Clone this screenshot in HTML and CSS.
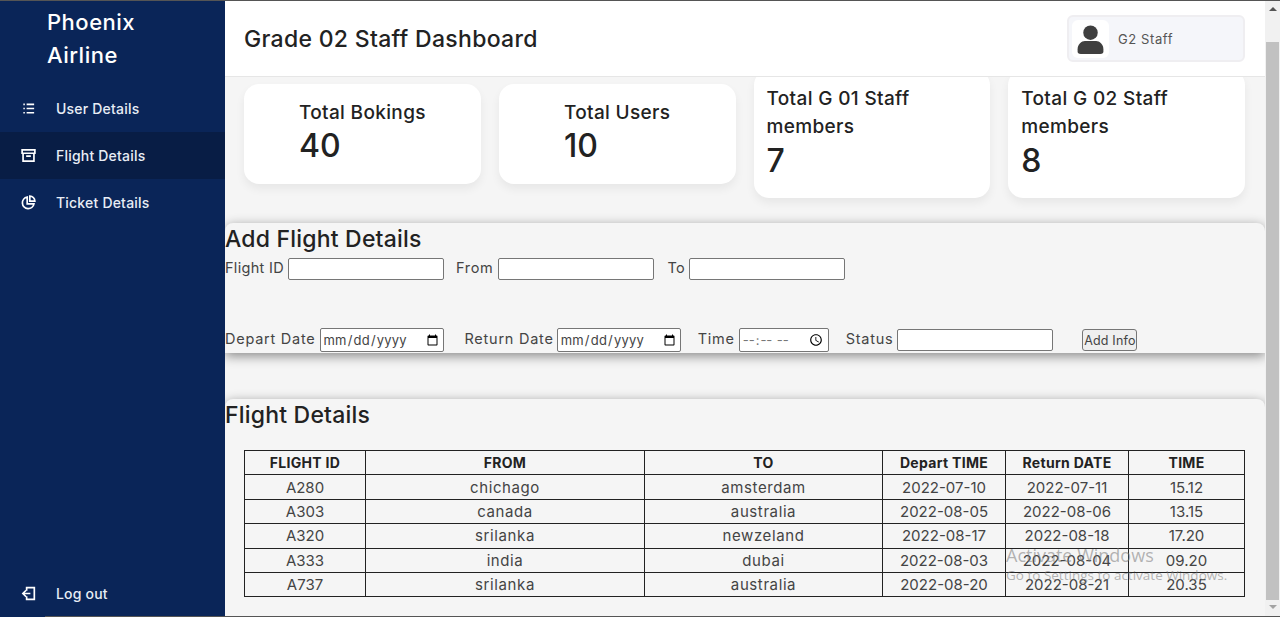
FILE: index.html
```html
<!DOCTYPE html>
<html lang="en">
<head>
  <meta charset="UTF-8" />
  <meta name="viewport" content="width=device-width, initial-scale=1.0" />
  <title>Grade 02 Staff Dashboard</title>
  <link rel="stylesheet" href="styles.css">
</head>
<body>
  <div class="page">
    <aside class="sidebar">
      <h2 class="brand">Phoenix<br>Airline</h2>
      <a class="nav-item" href="#">
        <svg class="nav-icon" viewBox="0 0 16 16"><path d="M2.5 3.5h1.6M2.5 8h1.6M2.5 12.5h1.6M6 3.5h8M6 8h8M6 12.5h8" /></svg>
        <span>User Details</span>
      </a>
      <a class="nav-item active" href="#">
        <svg class="nav-icon" viewBox="0 0 16 16"><path d="M1.2 2h13.6v3.6H1.2zM2.2 5.6v8.4h11.6V5.6M5.5 8.6h5" /></svg>
        <span>Flight Details</span>
      </a>
      <a class="nav-item" href="#">
        <svg class="nav-icon" viewBox="0 0 16 16"><path d="M6.6 2.2a6.2 6.2 0 1 0 7.2 7.2H6.6z" /><path d="M9.4 1.2a5.6 5.6 0 0 1 5.4 5.4H9.4z" /></svg>
        <span>Ticket Details</span>
      </a>
      <a class="nav-item logout" href="#">
        <svg class="nav-icon" viewBox="0 0 16 16"><path d="M6 5V1.8h8.2v12.4H6V11M10 8H2M5.2 4.8L2 8l3.2 3.2" /></svg>
        <span>Log out</span>
      </a>
    </aside>

    <main class="main">
      <header class="topbar">
        <h1>Grade 02 Staff Dashboard</h1>
        <div class="user-chip">
          <div class="avatar">
            <svg viewBox="0 0 36 38"><circle cx="18" cy="10.5" r="9" /><path d="M6 37c-3 0-4-1-4-3v-3c0-6 5-10 9-10h14c4 0 9 4 9 10v3c0 2-1 3-4 3z" /></svg>
          </div>
          <span>G2 Staff</span>
        </div>
      </header>

      <section class="cards">
        <div class="card short">
          <div>
            <h3>Total Bokings</h3>
            <p class="count">40</p>
          </div>
        </div>
        <div class="card short">
          <div>
            <h3>Total Users</h3>
            <p class="count">10</p>
          </div>
        </div>
        <div class="card tall">
          <div>
            <h3>Total G 01 Staff members</h3>
            <p class="count">7</p>
          </div>
        </div>
        <div class="card tall">
          <div>
            <h3>Total G 02 Staff members</h3>
            <p class="count">8</p>
          </div>
        </div>
      </section>

      <section class="panel add-panel">
        <h2>Add Flight Details</h2>
        <form class="flight-form">
          <div class="form-row first">
            <label>Flight ID</label><input class="text-input" type="text">
            <label class="from">From</label><input class="text-input" type="text">
            <label class="to">To</label><input class="text-input" type="text">
          </div>
          <div class="form-row second">
            <label>Depart Date</label><input class="date-input" type="date">
            <label class="ret">Return Date</label><input class="date-input" type="date">
            <label class="time">Time</label><input class="time-input" type="time">
            <label class="status">Status</label><input class="text-input" type="text">
            <button class="add-btn" type="button">Add Info</button>
          </div>
        </form>
      </section>

      <section class="panel table-panel">
        <h2>Flight Details</h2>
        <table class="flights">
          <thead>
            <tr><th class="c1">FLIGHT ID</th><th class="c2">FROM</th><th class="c3">TO</th><th class="c4">Depart TIME</th><th class="c5">Return DATE</th><th>TIME</th></tr>
          </thead>
          <tbody>
            <tr><td>A280</td><td>chichago</td><td>amsterdam</td><td>2022-07-10</td><td>2022-07-11</td><td>15.12</td></tr>
            <tr><td>A303</td><td>canada</td><td>australia</td><td>2022-08-05</td><td>2022-08-06</td><td>13.15</td></tr>
            <tr><td>A320</td><td>srilanka</td><td>newzeland</td><td>2022-08-17</td><td>2022-08-18</td><td>17.20</td></tr>
            <tr><td>A333</td><td>india</td><td>dubai</td><td>2022-08-03</td><td>2022-08-04</td><td>09.20</td></tr>
            <tr><td>A737</td><td>srilanka</td><td>australia</td><td>2022-08-20</td><td>2022-08-21</td><td>20.35</td></tr>
          </tbody>
        </table>
      </section>
    </main>

    <div class="scrollbar">
      <span class="arrow up"></span>
      <span class="thumb"></span>
      <span class="arrow down"></span>
    </div>
  </div>

  <div class="watermark">
    <p class="wm-title">Activate Windows</p>
    <p class="wm-sub">Go to Settings to activate Windows.</p>
  </div>
  <div class="bottom-line"></div>
</body>
</html>
```

FILE: styles.css
```css
* {
  box-sizing: border-box;
}

body {
  margin: 0;
  height: 617px;
  overflow: hidden;
  font-family: 'Inter', 'Noto Sans', sans-serif;
  background-color: #f5f5f5;
  color: #444;
  position: relative;
}

.page {
  display: flex;
  height: 617px;
  border-top: 1px solid #555;
}

/* sidebar */
.sidebar {
  width: 225px;
  flex-shrink: 0;
  background-color: #0a2558;
  display: flex;
  flex-direction: column;
}

.brand {
  margin: 5px 0 13px 47px;
  font-size: 22px;
  line-height: 33px;
  font-weight: 500;
  letter-spacing: 0.5px;
  color: #fff;
}

.nav-item {
  display: flex;
  align-items: center;
  height: 47px;
  padding-left: 21px;
  color: #e8edf5;
  font-size: 14px;
  font-weight: 500;
  letter-spacing: 0.2px;
  text-decoration: none;
}

.nav-item span {
  margin-left: 20px;
}

.nav-item.active {
  background-color: #081d45;
}

.nav-icon {
  width: 15px;
  height: 15px;
  fill: none;
  stroke: #fff;
  stroke-width: 1.8;
}

.logout {
  margin-top: auto;
}

/* main column */
.main {
  flex: 1;
  min-width: 0;
  overflow: hidden;
}

.topbar {
  position: relative;
  z-index: 2;
  height: 76px;
  background-color: #fff;
  border-bottom: 1px solid #e6e6e6;
  display: flex;
  align-items: center;
  justify-content: space-between;
  padding: 0 20px 0 19px;
}

.topbar h1 {
  margin: 1px 0 0;
  font-size: 23px;
  font-weight: 500;
  letter-spacing: 0.3px;
  color: #222;
}

.user-chip {
  width: 178px;
  height: 47px;
  background-color: #f5f6fa;
  border: 2px solid #efeef1;
  border-radius: 6px;
  display: flex;
  align-items: center;
  padding-left: 3px;
  font-size: 13px;
  letter-spacing: 0.6px;
  color: #555;
}

.avatar {
  width: 37px;
  height: 38px;
  background-color: #fff;
  border-radius: 6px;
  margin-right: 9px;
  padding: 2px 4px 1px;
}

.avatar svg {
  display: block;
  width: 100%;
  height: 100%;
  fill: #3f3f3f;
}

/* summary cards */
.cards {
  display: grid;
  grid-template-columns: repeat(4, 1fr);
  gap: 18px;
  align-items: center;
  margin: -7px 20px 0 19px;
}

.card {
  background-color: #fff;
  border-radius: 15px;
  box-shadow: 0 5px 10px rgba(0, 0, 0, 0.06);
  color: #222;
}

.card h3 {
  margin: 0;
  font-size: 19px;
  line-height: 28px;
  font-weight: 500;
  letter-spacing: 0.35px;
}

.count {
  margin: 0;
  font-size: 32px;
  line-height: 38px;
  font-weight: 500;
}

.short {
  height: 100px;
  display: flex;
  justify-content: center;
  padding-top: 15px;
}

.tall {
  height: 128px;
  padding: 15px 13px 0;
}

.tall h3 {
  width: 190px;
}

.tall .count {
  margin-top: 1px;
}

/* panels */
.panel {
  background-color: #f5f5f5;
  border-radius: 8px 8px 0 0;
  box-shadow: 0 3px 12px rgba(0, 0, 0, 0.45);
}

.panel h2 {
  margin: 0;
  font-size: 23px;
  line-height: 33px;
  font-weight: 500;
  letter-spacing: 0.2px;
  color: #222;
}

.add-panel {
  height: 130px;
  margin-top: 25px;
}

.form-row {
  display: flex;
  align-items: center;
  font-size: 14.5px;
  color: #444;
  height: 24px;
}

.form-row label {
  margin-right: 4px;
  padding-bottom: 3px;
}

.form-row.first {
  height: 22px;
  margin-top: 2px;
  margin-bottom: 48px;
  letter-spacing: 0.3px;
}

.form-row.second {
  letter-spacing: 0.75px;
}

.flight-form input {
  height: 22px;
  border: 1px solid #767676;
  border-radius: 2px;
  background-color: #fff;
  padding: 1px 2px;
  font-family: inherit;
  font-size: 13px;
  letter-spacing: 0.2px;
  color: #444;
}

.flight-form .text-input {
  width: 156px;
}

.flight-form .date-input {
  width: 124px;
  height: 24px;
}

.flight-form .time-input {
  width: 90px;
  height: 24px;
  color: #777;
}

.from {
  margin-left: 12px;
  letter-spacing: 0.7px;
}

.to {
  margin-left: 14px;
}

.form-row .ret {
  margin-left: 21px;
  margin-right: 3px;
}

.time {
  margin-left: 17px;
}

.status {
  margin-left: 17px;
}

.add-btn {
  margin-left: 29px;
  width: 55px;
  height: 22px;
  padding: 0;
  border: 1px solid #767676;
  border-radius: 3px;
  background-color: #efefef;
  font-family: inherit;
  font-size: 12.5px;
  letter-spacing: 0.2px;
  color: #444;
}

.table-panel {
  height: 240px;
  margin-top: 46px;
}

/* table */
.flights {
  border-collapse: collapse;
  table-layout: fixed;
  width: 1001px;
  margin: 18px 0 0 19px;
  font-size: 15px;
  color: #444;
}

.flights th,
.flights td {
  border: 1px solid #222;
  height: 24.4px;
  padding: 0;
  text-align: center;
  font-weight: 400;
}

.flights th {
  font-size: 14px;
  font-weight: 700;
  letter-spacing: 0.3px;
  color: #222;
}

.flights td:nth-child(2),
.flights td:nth-child(3) {
  letter-spacing: 0.6px;
}

.c1 {
  width: 121px;
}

.c2 {
  width: 279px;
}

.c3 {
  width: 238px;
}

.c4 {
  width: 123px;
}

.c5 {
  width: 123px;
}

/* fake scrollbar, the shot comes from a scrolled window */
.scrollbar {
  width: 15px;
  flex-shrink: 0;
  background-color: #f1f1f1;
  display: flex;
  flex-direction: column;
  align-items: center;
  padding: 0 1px;
}

.thumb {
  width: 13px;
  height: 558px;
  background-color: #c1c1c1;
}

.arrow {
  width: 0;
  height: 0;
  border-left: 4px solid transparent;
  border-right: 4px solid transparent;
}

.arrow.up {
  border-bottom: 4px solid #555;
  margin: 6px 0 31px;
}

.arrow.down {
  border-top: 4px solid #a3a3a3;
  margin-top: 5px;
}

/* windows overlay */
.watermark {
  position: absolute;
  left: 1006px;
  top: 543px;
  color: rgba(120, 120, 120, 0.55);
  font-family: 'Open Sans', sans-serif;
  pointer-events: none;
}

.watermark p {
  margin: 0;
}

.wm-title {
  font-size: 18px;
  line-height: 24px;
}

.wm-sub {
  font-size: 13.5px;
  line-height: 16px;
  margin-top: 1px;
}

.bottom-line {
  position: absolute;
  left: 45px;
  right: 0;
  bottom: 0;
  height: 1px;
  background-color: #555;
}
```
